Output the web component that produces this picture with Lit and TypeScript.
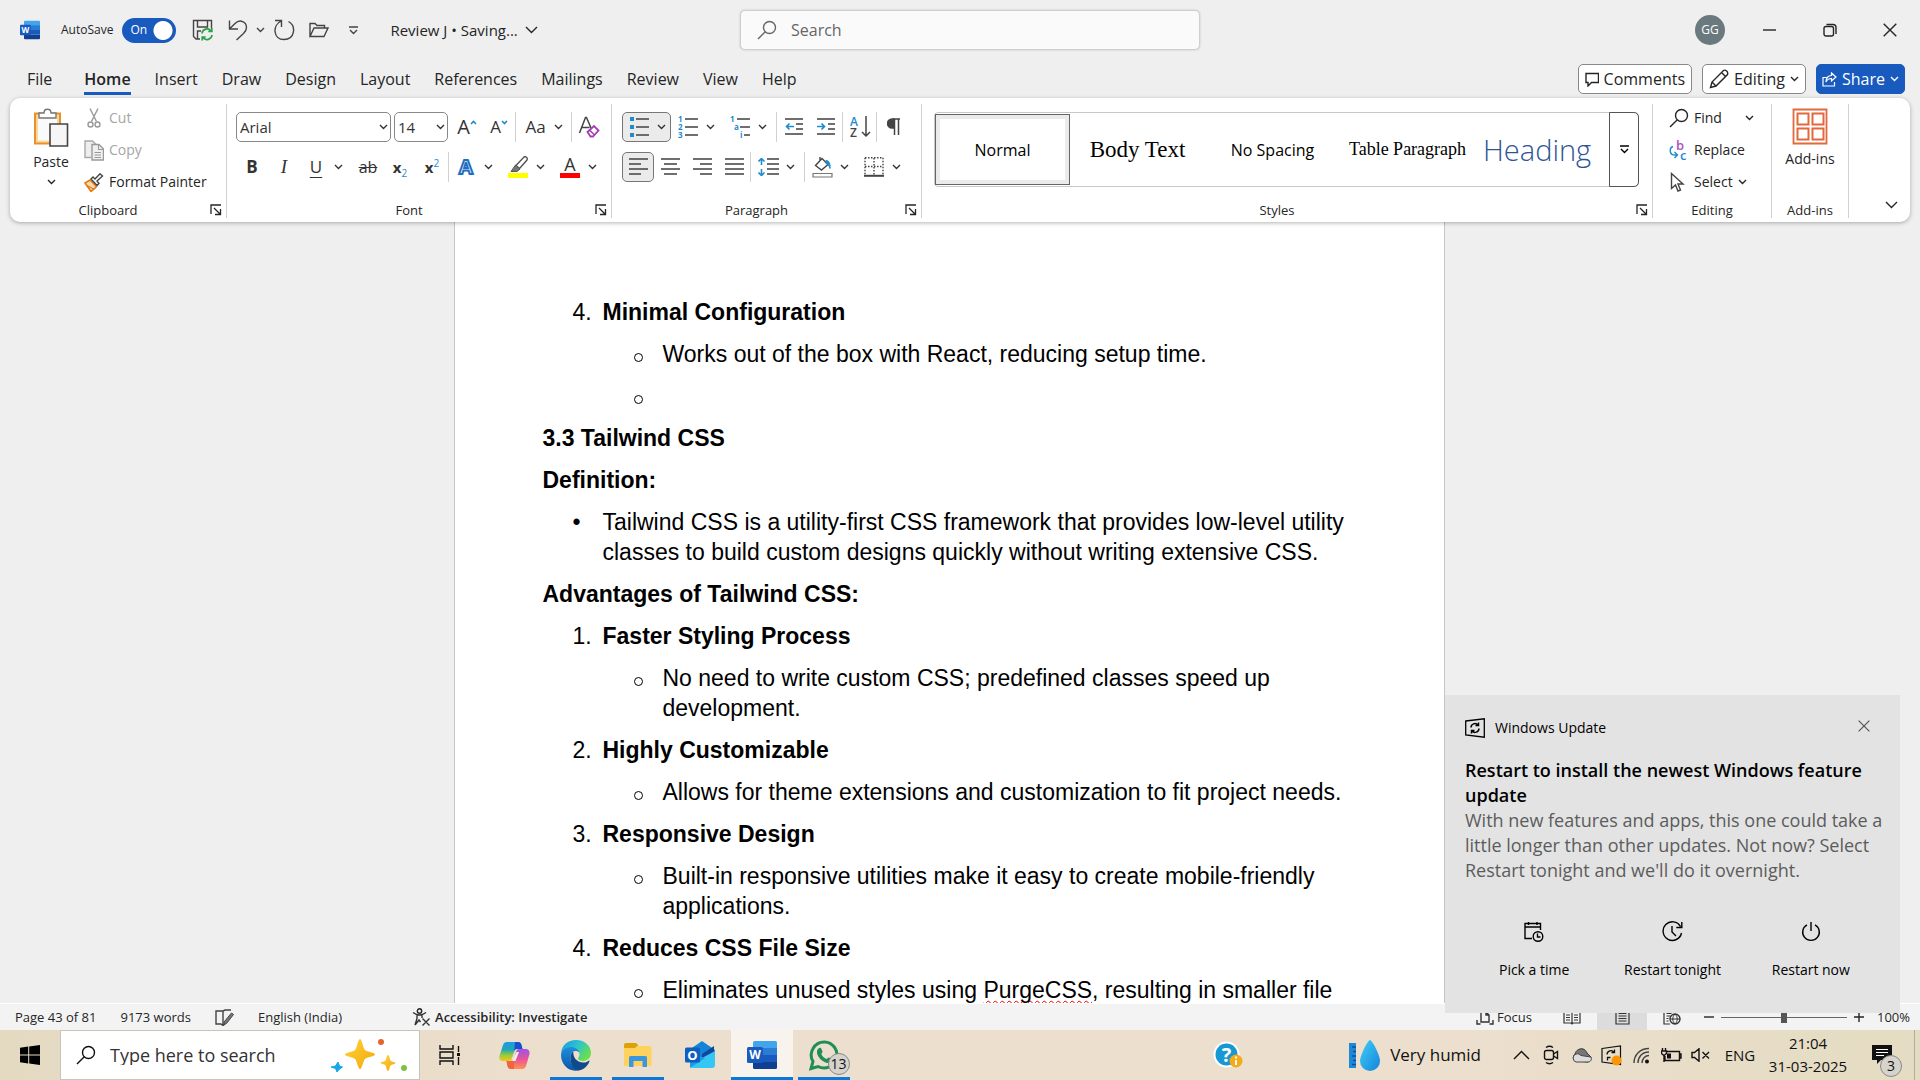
import { LitElement, html, svg, css, nothing, TemplateResult, SVGTemplateResult } from "lit";
import { customElement, state } from "lit/decorators.js";
import { classMap } from "lit/directives/class-map.js";

const icon = (w: number, h: number, body: SVGTemplateResult) => html`<svg
  width=${w}
  height=${h}
  viewBox="0 0 ${w} ${h}"
  fill="none"
  stroke="currentColor"
  stroke-width="1.4"
  aria-hidden="true"
>
  ${body}
</svg>`;

const chevron = () => icon(9, 6, svg`<path d="M1 1l3.5 3.5L8 1"/>`);
const bigChevron = () => icon(13, 8, svg`<path d="M1 1l5.5 5.5L12 1"/>`);
const moreChevron = () => icon(9, 9, svg`<path d="M0 1h9M1 4l3.5 3.5L8 4"/>`);
const launcher = () =>
  icon(12, 12, svg`<path d="M1 10V1h10M4 4l6 6M10.500 5v5.500H5" stroke-width="1.300"/>`);

const wordLogo = (size: number) => html`<svg width=${size} height=${size} viewBox="0 0 30 30" aria-hidden="true">
  <rect x="6" y="1" width="24" height="8" rx="1.500" fill="#41a5ee" />
  <path d="M6 8h24v7H6z" fill="#2b7cd3" />
  <path d="M6 15h24v7H6z" fill="#185abd" />
  <path d="M6 22h24v5.500a1.500 1.500 0 0 1-1.500 1.500h-21A1.500 1.500 0 0 1 6 27.500z" fill="#103f91" />
  <rect x="0" y="7" width="16" height="16" rx="1.500" fill="#185abd" />
  <text x="8" y="19" text-anchor="middle" font-size="12" font-weight="700" fill="#fff" font-family="Open Sans, sans-serif">W</text>
</svg>`;

const lines = (rows: number[][]) =>
  svg`${rows.map(([x1, x2, y]) => svg`<path d="M${x1} ${y}H${x2}" stroke="#555" stroke-width="1.700"/>`)}`;

const blue = "#1e8bcd";

const I = {
  save: () =>
    icon(
      22,
      22,
      svg`<path d="M8 20H4L1.500 17.500V1.500h18V9M5.500 1.500V8h10V1.500M5.500 20v-8H9" stroke="#444"/>
      <path d="M10 14.500a5 5 0 0 1 9-2.500M19.800 9v3.500h-3.500M20 16a5 5 0 0 1-9 2.500M10.200 21.500V18h3.500" stroke="#2ba147" stroke-width="1.700"/>`,
    ),
  undo: () => icon(20, 22, svg`<path d="M1.500 1.500v8.500h8.500M1.500 10L7 4.500C12-.5 18.500 3 18.500 8.500c0 3-1 4-3 6L8.500 21"/>`),
  redo: () => icon(22, 22, svg`<path d="M2 1.500h6.500V8M8.500 1.800C-1 6 0 20.500 11 20.500c11 0 12.500-13.500 4.500-18"/>`),
  folder: () => icon(20, 16, svg`<path d="M1 14.500V1.500h5l2 2h7.500V6M1 14.500L5 6h14l-4 8.500H1z"/>`),
  search: () => icon(20, 20, svg`<circle cx="12.500" cy="7.500" r="6"/><path d="M8.300 11.800L1 19"/>`),
  min: () => icon(14, 14, svg`<path d="M0 7h13"/>`),
  restore: () => icon(14, 14, svg`<rect x="1" y="3.500" width="9.500" height="9.500" rx="2"/><path d="M3.500 1.500H10A3 3 0 0 1 13 4.500V11"/>`),
  close: () => icon(14, 14, svg`<path d="M.7.7l12.600 12.600M13.300.7L.7 13.300"/>`),
  comment: () => icon(14, 15, svg`<path d="M1 1.500h12.500v9H6.500L3 14v-3.500H1z"/>`),
  pencil: () => icon(20, 20, svg`<path d="M1.500 18.500L3 13 14.500 1.500c2-1.200 5 1.500 4 4L7 17zM12.500 3.500l4 4M3 13l4 4"/>`),
  share: () => icon(15, 15, svg`<path d="M4.500 5.500H1v8.500h11.500V10M9.500 1l4.500 4-4.500 4V6.500C6.500 6.500 5 7.500 4 10c0-4 2-6.500 5.500-6.500z" stroke-width="1.200"/>`),
  paste: () =>
    icon(
      36,
      40,
      svg`<path d="M2 5.500h25v30H2z" fill="#f9d79a" stroke="#e8912d" stroke-width="2"/>
      <path d="M5 8.500h19v24H5z" fill="#fafafa" stroke="none"/>
      <path d="M6 10V5h5c0-5 7-5 7 0h5v5z" fill="#fff" stroke="#777"/>
      <path d="M17 16h17.500v22H17z" fill="#f6f6f6" stroke="#444" stroke-width="1.600"/>`,
    ),
  cut: () =>
    icon(20, 20, svg`<path d="M6 .5l6.500 13M14 .5l-6.500 13" stroke="#999"/><circle cx="6.500" cy="16.500" r="2.500" stroke="#999"/><circle cx="13.500" cy="16.500" r="2.500" stroke="#999"/>`),
  copy: () =>
    icon(
      20,
      21,
      svg`<path d="M7 17.500H1V1h7.500L12 4.500" stroke="#a8a8a8" fill="#eee"/><path d="M8 4.500h7l4.500 4.500v11H8z" fill="#f0f0f0" stroke="#999"/>
      <path d="M14.500 4.500V9.500h5M10.500 12.500h6.500M10.500 15h6.500M10.500 17.500h6.500" stroke="#999" stroke-width="1.100"/>`,
    ),
  painter: () =>
    icon(
      20,
      19,
      svg`<path d="M1 10l5-3 6.500 6.500c-1.500 2-3.500 3.500-5.500 5z" fill="#fbd9a8" stroke="#e07b1c" stroke-width="1.600"/><path d="M3 12.500l6.500 3.500" stroke="#e07b1c"/>
      <path d="M7 6l6 6.500 2-2-2-2.500 5.500-5L16 .8 11 6 9 4z" fill="#fff" stroke="#444"/>`,
    ),
  clear: () =>
    icon(
      22,
      22,
      svg`<path d="M1.500 17L7.500 1.500h1L13 12M4 11.500h7.500" stroke="#444" stroke-width="1.500"/>
      <path d="M9.500 16l6.500-6 4.500 4.500-5.500 6h-2.500z" fill="#fff" stroke="#a33fb0" stroke-width="1.800"/><path d="M11.500 14l4.500 4.500" stroke="#a33fb0" stroke-width="1.600"/>`,
    ),
  pen: () =>
    icon(
      20,
      22,
      svg`<path d="M8 9.500l8-8.500c2-1 4 1 3 3l-7.500 8.500z" fill="#fff" stroke="#555"/><path d="M7.500 9l4.500 4-3 2.500H3z" fill="#777" stroke="#555" stroke-width="1"/><path d="M0 17h20v5H0z" fill="#ffff00" stroke="none"/>`,
    ),
  bullets: () => icon(20, 20, svg`<path d="M1 0h4v4H1zM1 8h4v4H1zM1 16h4v4H1z" fill=${blue} stroke="none"/>${lines([[7, 20, 2], [7, 20, 10], [7, 20, 18]])}`),
  numbers: () =>
    icon(
      20,
      22,
      svg`<g fill=${blue} stroke="none" font-size="8" font-weight="700" font-family="Open Sans, sans-serif"><text x="0" y="6">1</text><text x="0" y="14">2</text><text x="0" y="22">3</text></g>${lines([[7, 20, 3], [7, 20, 11], [7, 20, 19]])}`,
    ),
  multi: () =>
    icon(
      20,
      22,
      svg`<g fill=${blue} stroke="none" font-size="8" font-weight="700" font-family="Open Sans, sans-serif"><text x="0" y="6">1</text><text x="4" y="14">a</text><text x="10" y="22">i</text></g>${lines([[7, 20, 3], [10, 20, 11], [14, 20, 19]])}`,
    ),
  outdent: () => icon(19, 18, svg`${lines([[0, 18, 1], [11, 18, 6], [11, 18, 11], [0, 18, 16]])}<path d="M9 8.500H1.500M4.500 5.500l-3 3 3 3" stroke=${blue} stroke-width="1.600"/>`),
  indent: () => icon(19, 18, svg`${lines([[0, 18, 1], [11, 18, 6], [11, 18, 11], [0, 18, 16]])}<path d="M0 8.500h7.500M4.500 5.500l3 3-3 3" stroke=${blue} stroke-width="1.600"/>`),
  sort: () =>
    icon(
      21,
      22,
      svg`<g stroke="none" font-size="12" font-weight="600" font-family="Open Sans, sans-serif"><text x="0" y="10" fill=${blue}>A</text><text x="0" y="21" fill="#444">Z</text></g><path d="M16 0v20M12 16l4 4 4-4" stroke="#444" stroke-width="1.500"/>`,
    ),
  pilcrow: () => icon(14, 18, svg`<path d="M13 1H6M7.500 1v16M11.500 1v16" stroke="#444" stroke-width="1.500"/><path d="M7 1H5a4.500 4.500 0 0 0 0 9h2z" fill="#444" stroke="#444"/>`),
  left: () => icon(19, 18, lines([[0, 19, 1], [0, 12, 6], [0, 19, 11], [0, 12, 16]])),
  center: () => icon(19, 18, lines([[0, 19, 1], [3, 16, 6], [0, 19, 11], [3, 16, 16]])),
  right: () => icon(19, 18, lines([[0, 19, 1], [7, 19, 6], [0, 19, 11], [7, 19, 16]])),
  justify: () => icon(19, 18, lines([[0, 19, 1], [0, 19, 6], [0, 19, 11], [0, 19, 16]])),
  spacing: () => icon(21, 18, svg`${lines([[9, 21, 1], [9, 21, 6], [9, 21, 11], [9, 21, 16]])}<path d="M3.500 0v7M.5 3.500l3-3 3 3M3.500 18v-7M.5 14.500l3 3 3-3" stroke=${blue} stroke-width="1.600"/>`),
  shading: () =>
    icon(
      21,
      22,
      svg`<path d="M3.500 9.500L10 2.500l6 6-6.500 5.500zM8 1v4" stroke="#444"/><path d="M14 4.500c3 0 4.500 3 4 8-1-3-2-4-4-5z" fill=${blue} stroke=${blue} stroke-width="1"/><path d="M1 17.500h19v3.500H1z" fill="#fff" stroke="#777" stroke-width="1.200"/>`,
    ),
  borders: () => icon(20, 20, svg`<path d="M1 .8h18M1 .8V18M19 .8V18M10 1v17M1 9.500h18" stroke="#444" stroke-dasharray="1.500 1.500"/><path d="M0 18.800h20" stroke="#444" stroke-width="2"/>`),
  replace: () =>
    icon(
      20,
      22,
      svg`<g stroke="none" font-size="13" font-weight="600" font-family="Open Sans, sans-serif"><text x="7" y="11" fill="#b04fc0">b</text><text x="11" y="21" fill=${blue}>c</text></g><path d="M4 7.500C0 9 0 16 6 16h2M5.500 13l3 3-3 3" stroke=${blue}/>`,
    ),
  select: () => icon(20, 20, svg`<path d="M2.500 1.500v15l4-3.500 2.500 6 2.500-1-2.500-6h5z" stroke="#444"/>`),
  addins: () =>
    icon(
      36,
      37,
      svg`<g stroke="#e0693e" stroke-width="2"><path d="M1.500 1.500h33v34h-33z" stroke-width="1.800"/><path d="M5.500 5.500h11v11h-11zM20.500 5.500h11v11h-11zM5.500 20.500h11v11h-11zM20.500 20.500h11v11h-11z"/></g>`,
    ),
  proof: () => icon(19, 17, svg`<path d="M8 2H1v13h5l2 1.500V2l2-1h6M8 16.500L10 15" stroke="#444"/><path d="M9 13l7.500-9 2 1.500-7 9-2.500 1z" fill="#777" stroke="#444" stroke-width="1"/>`),
  access: () =>
    icon(19, 18, svg`<circle cx="7.500" cy="3" r="2.200"/><path d="M1 4.500c4 3 9 3 13 0M5 6.500v4L3 17M10 6.500V10M3 17l4-5 1.500 2M10.500 10.500l7 7M17.500 10.500l-7 7" stroke="#333"/>`),
  focus: () => icon(18, 16, svg`<path d="M1 11v4h3.500M17 11v4h-3.500M5 3h5l3 3v7H5zM10 3v3h3" stroke="#333"/>`),
  read: () => icon(18, 15, svg`<path d="M1 2h7l1 1 1-1h7v11h-7l-1 1-1-1H1zM9 3v11M3 5h4M3 7.500h4M3 10h4M11 5h4M11 7.500h4M11 10h4" stroke="#333" stroke-width="1.200"/>`),
  print: () => icon(15, 16, svg`<path d="M1 1h13v14H1zM3.500 4.500h8M3.500 7h8M3.500 9.500h8M3.500 12h8" stroke="#333" stroke-width="1.200"/>`),
  web: () => icon(18, 16, svg`<path d="M7 15H1V1h12v3M3.500 4.500h5M3.500 7h4M3.500 9.500h2M3.500 12h2" stroke="#333" stroke-width="1.200"/><circle cx="12" cy="10" r="5" stroke="#333"/><path d="M7 10h10M12 5c-3 3-3 7 0 10M12 5c3 3 3 7 0 10" stroke="#333" stroke-width="1"/>`),
  update: () =>
    icon(
      20,
      20,
      svg`<path d="M.7 3L19.300.8v18.400L.7 17z" stroke-width="1.300"/><path d="M6 9.500a4 4 0 0 1 7-2.500M13.500 4.500V7.500h-3M14 10.500a4 4 0 0 1-7 2.500M6.500 15.500v-3h3" stroke-width="1.500"/>`,
    ),
  calendar: () => icon(20, 20, svg`<path d="M8 16.500H1v-15h15.500V8M1 5h15.500M4.500 0v3M13 0v3"/><circle cx="14" cy="14.500" r="4.800"/><path d="M13.500 11.500v3.500h3"/>`),
  tonight: () => icon(21, 21, svg`<path d="M18.500 5.500A9.300 9.300 0 1 0 19.500 12M19.800 1v5.500h-5.500M10 5v6l4 4"/>`),
  power: () => icon(20, 20, svg`<path d="M6 2.800a8.300 8.300 0 1 0 8 0M10 0v9"/>`),
  windows: () => html`<svg width="20" height="20" viewBox="0 0 20 20" aria-hidden="true"><path d="M0 2.700L8.200 1.500V9.600H0zM9.200 1.400L20 0v9.600H9.200zM0 10.500h8.200v8L0 17.300zM9.200 10.500H20V20L9.200 18.600z" /></svg>`,
  sparkle: () => html`<svg width="76" height="34" viewBox="0 0 76 34" aria-hidden="true">
    <defs><linearGradient id="gold" x1="0" y1="0" x2="1" y2="1"><stop offset="0" stop-color="#ffd43a" /><stop offset="1" stop-color="#f3a70c" /></linearGradient></defs>
    <path d="M29 1c2 0 3 9 5 11s10 2.500 10 4.500-8 2.500-10 4.500-3 10-5 10-3-8-5-10-10-2.500-10-4.500 8-2.500 10-4.500 3-11 5-11z" fill="url(#gold)" />
    <path d="M57 17c1.500 0 1.500 4 2.500 5.500s5 1.500 5 2.500-4 1.500-5 2.500-1 5.500-2.500 5.500-1.500-4-2.500-5.500-5-1.500-5-2.500 4-1.500 5-2.500 1-5.500 2.500-5.500z" fill="url(#gold)" />
    <path d="M7 24l1.500 4 3 1-3.500 2.500L6 34l-1.500-3.500L0 29l4.500-1z" fill="#16a7e8" stroke="#16a7e8" stroke-width="1" stroke-linejoin="round" />
    <circle cx="50" cy="4" r="3" fill="#e8622c" /><circle cx="73" cy="30" r="3" fill="#7dc242" />
  </svg>`,
  taskview: () => icon(22, 20, svg`<path d="M1 0v4h13V0M1 20v-4h13v4M1 7h13v6H1zM19.500 1v6M19.500 12v8" stroke="#111"/><path d="M18 8h3v3h-3z" fill="#111" stroke="none"/>`),
  copilot: () => html`<svg width="31" height="29" viewBox="0 0 31 29" aria-hidden="true">
    <defs>
      <linearGradient id="cpA" x1="0" y1="0" x2="0" y2="1"><stop offset="0" stop-color="#1a9be8" /><stop offset=".4" stop-color="#22a7b8" /><stop offset=".7" stop-color="#9ccb3b" /><stop offset="1" stop-color="#f5c518" /></linearGradient>
      <linearGradient id="cpB" x1="0" y1="0" x2="0" y2="1"><stop offset="0" stop-color="#9a55e8" /><stop offset=".5" stop-color="#e8539b" /><stop offset="1" stop-color="#ff9150" /></linearGradient>
    </defs>
    <path d="M8 1h11c2 0 3 1 3.500 3l1 4h-5c-2 0-3 1-3.500 3l-2 6c-.5 2-1.500 3-3.500 3H4c-3 0-4-2-3.500-5L4 4c.7-2 2-3 4-3z" fill="url(#cpA)" />
    <path d="M16 1h3c2 0 3 1 3.500 3l1 4h-5c-2 0-3 .5-3.500 3z" fill="#1b4fc9" />
    <path d="M23 28H12c-2 0-3-1-3.500-3l-1-5h4c2 0 3-1 3.500-3l2-6c.5-2 1.500-3 3.500-3h6c3 0 4.500 2 4 5l-3.500 12c-.7 2-2 3-4 3z" fill="url(#cpB)" />
    <path d="M15 28h-3c-2 0-3-1-3.500-3l-1-5h4c2 0 3-1 3.500-3z" fill="#f0653d" />
    <path d="M17.500 11h2.500l-3.500 9H13z" fill="#f7ede4" />
  </svg>`,
  edge: () => html`<svg width="32" height="32" viewBox="0 0 32 32" aria-hidden="true">
    <defs>
      <linearGradient id="edA" x1="0" y1="0" x2="1" y2=".6"><stop offset="0" stop-color="#1a93e0" /><stop offset=".5" stop-color="#2bc3d2" /><stop offset="1" stop-color="#6be04a" /></linearGradient>
      <linearGradient id="edB" x1="0" y1="0" x2="0" y2="1"><stop offset="0" stop-color="#1b8fdd" /><stop offset="1" stop-color="#0e54a8" /></linearGradient>
    </defs>
    <path d="M1 14C2 6 8 1 16 1c9 0 15 6 15 13 0 5-4 8-8 8-3 0-5-1-5-2.500 0-1 1.500-1.500 1.500-4.500 0-4-4-6-8-6-5 0-9 2-10.500 5z" fill="url(#edA)" />
    <path d="M1 16c0-5 5-8 10-8 4 0 8 2.500 8.500 6-1-1.500-2.500-2-4-2-4 0-6 4-5 9 1 6 5 9 9 10-10 3-18.500-5-18.500-15z" fill="url(#edB)" />
    <path d="M10.300 18c0-2 1-4.500 3-5.500-.5 5 3 11 10 11 2.500 0 4.500-1 5.500-1.800.7-.4 1 .3.500 1C27 28 23 31 18 31.500c-4-.5-7.700-6-7.700-13.500z" fill="#114a8b" />
  </svg>`,
  explorer: () => html`<svg width="28" height="24" viewBox="0 0 28 24" aria-hidden="true">
    <path d="M0 2a2 2 0 0 1 2-2h10l2 2v3H0z" fill="#e0a106" /><path d="M13 3h13a1.500 1.500 0 0 1 1.500 1.500V23H0V5h11z" fill="#ffd25e" />
    <path d="M5 24V14.500A1.500 1.500 0 0 1 6.500 13h15a1.500 1.500 0 0 1 1.500 1.500V24h-4.500v-6h-9v6z" fill="#3b97dd" />
  </svg>`,
  outlook: () => html`<svg width="30" height="28" viewBox="0 0 30 28" aria-hidden="true">
    <path d="M4 9L17 0l13 9v6L17 22 4 18z" fill="#1384d8" /><path d="M17 13l12-8v9L17 21z" fill="#12469c" />
    <path d="M5 20l12-3 13-7v14a3 3 0 0 1-3 3H8a3 3 0 0 1-3-3z" fill="#36c6f4" /><path d="M5 27l15-10-10-3-5 3z" fill="#1a9be4" />
    <rect x="0" y="6.500" width="15" height="15" rx="1.500" fill="#0f5fc0" />
    <text x="7.500" y="18.500" text-anchor="middle" font-size="13" font-weight="700" fill="#fff" font-family="Open Sans, sans-serif">O</text>
  </svg>`,
  whatsapp: () => html`<svg width="31" height="31" viewBox="0 0 31 31" aria-hidden="true">
    <path d="M15.500 2a13 13 0 1 1-6.500 24.500L2 28.500l2-7A13 13 0 0 1 15.500 2z" fill="none" stroke="#1f8f55" stroke-width="3" />
    <path d="M9.500 8.500c1-1.200 2.500-.8 3 .5l1 2.500c.3 1-1.500 2-1 3 1 2 3 3.500 5 4.500 1 0 1.500-2 2.500-1.500l3 1.500c.6 1.500-1 4-4 4-5 0-12-7-11-12 .2-1 .8-2 1.500-2.500z" fill="#1f8f55" />
  </svg>`,
  help: () => html`<svg width="30" height="28" viewBox="0 0 30 28" aria-hidden="true">
    <circle cx="13.500" cy="13.500" r="13" fill="#fff" /><circle cx="13.500" cy="13.500" r="11" fill="#1598d4" />
    <text x="13.500" y="20.500" text-anchor="middle" font-size="20" font-weight="700" fill="#fff" font-family="Open Sans, sans-serif">?</text>
    <circle cx="23" cy="20" r="6.500" fill="#f5ab18" /><path d="M23 19v5M23 15.500v2" stroke="#fff" stroke-width="2" />
  </svg>`,
  humid: () => html`<svg width="31" height="32" viewBox="0 0 31 32" aria-hidden="true">
    <defs><linearGradient id="drop" x1="0" y1="0" x2="1" y2="1"><stop offset="0" stop-color="#40d0f5" /><stop offset="1" stop-color="#1583dc" /></linearGradient></defs>
    <path d="M0 4h7v25H0z" fill="#1e88d8" /><path d="M3 8h4M4 12.500h3M3 17h4M4 21.500h3M3 25.500h4" stroke="#0d4f96" stroke-width="1.500" />
    <path d="M21 1c2 0 10 15 10 21a9.800 9.800 0 0 1-20 0C11 16 19 1 21 1z" fill="url(#drop)" />
  </svg>`,
  up: () => icon(17, 10, svg`<path d="M1 9l7.500-7.500L16 9"/>`),
  camera: () => icon(16, 20, svg`<rect x="1.500" y="5.500" width="9" height="9" rx="2"/><path d="M10.500 9l4-2.500v7l-4-2.500M3 2.500c2-1.500 5-1.500 7 0M3 17.500c2 1.500 5 1.500 7 0"/>`),
  cloud: () => html`<svg width="21" height="15" viewBox="0 0 21 15" aria-hidden="true">
    <path d="M5 13A4 4 0 0 1 4 6c1-4 5-6 8-5 2 .5 3 2 4 4l4 4-3 5z" fill="#777" stroke="#333" stroke-width="1" /><path d="M5 14a4.200 4.200 0 0 1 0-8c2-.5 3 0 5 1.500L20 9c1 2 0 5-3 5z" fill="#dcdcdc" stroke="#444" stroke-width="1" />
  </svg>`,
  trayUpdate: () => html`<svg width="21" height="21" viewBox="0 0 21 21" fill="none" stroke="#111" aria-hidden="true">
    <path d="M1 3.500L19.500 1v18.500L1 17z" stroke-width="1.200" /><path d="M6 9.500a4 4 0 0 1 7-2.500M13.500 4.500V7.500h-3M6.500 15.500v-3h3" stroke-width="1.300" /><circle cx="15.500" cy="15.500" r="5" fill="#ff9500" stroke="none" />
  </svg>`,
  wifi: () => icon(17, 17, svg`<path d="M1 16C1 8 7 1.500 16 1.500M5 16c0-6 4-11 11-11M9 16c0-4 3-7.500 7-7.500" stroke="#444"/><circle cx="14" cy="14.500" r="2" fill="#111" stroke="none"/>`),
  battery: () => icon(21, 14, svg`<path d="M6 3.500h12.500v9H4V8M18.500 6H20v4h-1.500M1.500 0v3M4.500 0v3M.5 3h5v2.500L3 7.500.5 5.500zM3 7v7"/><path d="M6 5.500h4v5H6z" fill="#111" stroke="none"/>`),
  mute: () => icon(20, 14, svg`<path d="M1 4.500h2.500L8 .8v12.400L3.500 9.500H1zM11.500 4l6.500 6.500M18 4l-6.500 6.500"/>`),
  note: () => html`<svg width="20" height="20" viewBox="0 0 20 20" aria-hidden="true"><path d="M0 0h20v15H9l-4 4v-4H0z" fill="#111" /><path d="M4 4.500h12M4 7.500h12M4 10.500h8" stroke="#fff" stroke-width="1.200" /></svg>`,
};

type Entry = { kind: "title"; text: string } | { kind: "num"; n: string; text: string } | { kind: "dot"; text: string } | { kind: "sub"; text: string | TemplateResult };

const DOCUMENT: Entry[] = [
  { kind: "num", n: "4.", text: "Minimal Configuration" },
  { kind: "sub", text: "Works out of the box with React, reducing setup time." },
  { kind: "sub", text: "\u00a0" },
  { kind: "title", text: "3.3 Tailwind CSS" },
  { kind: "title", text: "Definition:" },
  { kind: "dot", text: "Tailwind CSS is a utility-first CSS framework that provides low-level utility classes to build custom designs quickly without writing extensive CSS." },
  { kind: "title", text: "Advantages of Tailwind CSS:" },
  { kind: "num", n: "1.", text: "Faster Styling Process" },
  { kind: "sub", text: "No need to write custom CSS; predefined classes speed up development." },
  { kind: "num", n: "2.", text: "Highly Customizable" },
  { kind: "sub", text: "Allows for theme extensions and customization to fit project needs." },
  { kind: "num", n: "3.", text: "Responsive Design" },
  { kind: "sub", text: "Built-in responsive utilities make it easy to create mobile-friendly applications." },
  { kind: "num", n: "4.", text: "Reduces CSS File Size" },
  { kind: "sub", text: html`Eliminates unused styles using <span class="typo">PurgeCSS</span>, resulting in smaller file` },
];

const base = css`
  :host {
    display: block;
    font-family: "Open Sans", "Noto Sans", sans-serif;
    font-size: 15px;
    line-height: 20px;
    color: #252525;
  }
  * {
    box-sizing: border-box;
  }
  svg {
    display: block;
    flex: none;
  }
  button,
  input,
  select {
    font: inherit;
    color: inherit;
    margin: 0;
    padding: 0;
    border: 0;
    background: none;
  }
  button {
    display: flex;
    align-items: center;
    justify-content: center;
    white-space: nowrap;
  }
  a {
    color: inherit;
    text-decoration: none;
  }
`;

@customElement("title-bar")
class TitleBar extends LitElement {
  @state() private autosave = true;

  static styles = [
    base,
    css`
      .bar {
        display: grid;
        grid-template-columns: 1fr minmax(200px, 460px) 1fr;
        align-items: center;
        height: 60px;
        padding-left: 20px;
      }
      .left,
      .right,
      .switch {
        display: flex;
        align-items: center;
      }
      .switch {
        gap: 9px;
        margin-left: 21px;
        font-size: 12px;
      }
      .toggle {
        display: grid;
        align-items: center;
      }
      .toggle > * {
        grid-area: 1 / 1;
      }
      .toggle input {
        appearance: none;
        width: 54px;
        height: 25px;
        border-radius: 13px;
        background: radial-gradient(circle at 41px 50%, #fff 9px, #185abd 10px);
      }
      .toggle span {
        padding-left: 8px;
        color: #fff;
        pointer-events: none;
      }
      .tools {
        display: flex;
        align-items: center;
        margin-left: 16px;
        color: #444;
      }
      .name {
        gap: 7px;
        margin-left: 32px;
        font-size: 15px;
      }
      .gap-s {
        margin-left: 8px;
      }
      .gap-m {
        margin-left: 14px;
      }
      .gap-l {
        margin-left: 20px;
      }
      .search {
        display: flex;
        align-items: center;
        gap: 14px;
        height: 40px;
        padding: 0 16px;
        border: 1px solid #d0d0d0;
        border-radius: 5px;
        background: #fafafa;
        box-shadow: 0 0 2px #bbb;
        color: #666;
      }
      .search input {
        flex: 1;
        min-width: 0;
        font-size: 16px;
      }
      .search input::placeholder {
        color: #666;
        opacity: 1;
      }
      .right {
        justify-content: flex-end;
      }
      .avatar {
        width: 30px;
        height: 30px;
        margin-right: 15px;
        border-radius: 50%;
        background: #69797e;
        color: #fff;
        font-size: 12px;
      }
      .window {
        width: 60px;
        height: 60px;
      }
    `,
  ];

  render() {
    return html`<header class="bar">
      <div class="left">
        ${wordLogo(20)}
        <label class="switch">
          AutoSave
          <span class="toggle">
            <input type="checkbox" .checked=${this.autosave} @change=${() => (this.autosave = !this.autosave)} />
            <span>${this.autosave ? "On" : "Off"}</span>
          </span>
        </label>
        <div class="tools">
          <button aria-label="Save">${I.save()}</button>
          <button class="gap-m" aria-label="Undo">${I.undo()}</button>
          <button class="gap-s" aria-label="Undo options">${chevron()}</button>
          <button class="gap-s" aria-label="Repeat">${I.redo()}</button>
          <button class="gap-m" aria-label="Open">${I.folder()}</button>
          <button class="gap-l" aria-label="Customize toolbar">${moreChevron()}</button>
        </div>
        <button class="name">Review J • Saving... ${bigChevron()}</button>
      </div>
      <label class="search">${I.search()}<input type="search" placeholder="Search" aria-label="Search" /></label>
      <div class="right">
        <button class="avatar" aria-label="Account">GG</button>
        <button class="window" aria-label="Minimize">${I.min()}</button>
        <button class="window" aria-label="Restore">${I.restore()}</button>
        <button class="window" aria-label="Close">${I.close()}</button>
      </div>
    </header>`;
  }
}

@customElement("ribbon-tabs")
class RibbonTabs extends LitElement {
  @state() private active = "Home";

  static styles = [
    base,
    css`
      .row {
        display: flex;
        align-items: center;
        justify-content: space-between;
        height: 38px;
        padding: 0 15px;
      }
      nav,
      .actions {
        display: flex;
      }
      .tab {
        display: flex;
        padding: 0 12px;
        font-size: 16px;
      }
      .tab span {
        height: 32px;
        line-height: 32px;
        border-bottom: 3px solid transparent;
      }
      .tab:first-child {
        margin-right: 8px;
      }
      .on {
        font-weight: 600;
      }
      .on span {
        border-color: #185abd;
      }
      .actions {
        gap: 10px;
        font-size: 16px;
      }
      .actions button {
        gap: 5px;
        height: 30px;
        padding: 0 6px;
        border: 1px solid #888;
        border-radius: 5px;
        background: #fff;
      }
      .actions .share {
        padding: 0 5px;
        border-color: #185abd;
        background: #185abd;
        color: #fff;
      }
    `,
  ];

  render() {
    const tabs = ["File", "Home", "Insert", "Draw", "Design", "Layout", "References", "Mailings", "Review", "View", "Help"];
    return html`<div class="row">
      <nav>
        ${tabs.map((t) => html`<button class=${classMap({ tab: true, on: t === this.active })} @click=${() => (this.active = t)}><span>${t}</span></button>`)}
      </nav>
      <div class="actions">
        <button>${I.comment()}Comments</button>
        <button>${I.pencil()}Editing ${chevron()}</button>
        <button class="share">${I.share()}Share ${chevron()}</button>
      </div>
    </div>`;
  }
}

@customElement("ribbon-panel")
class RibbonPanel extends LitElement {
  static styles = [
    base,
    css`
      .ribbon {
        display: flex;
        margin: 0 10px;
        padding: 6px 0 4px;
        border-radius: 10px;
        background: #fff;
        box-shadow: 0 1px 4px rgba(0, 0, 0, 0.3);
      }
      .group {
        display: flex;
        flex-direction: column;
        justify-content: space-between;
        height: 114px;
        border-right: 1px solid #d0d0d0;
      }
      .foot {
        display: grid;
        grid-template-columns: 1fr 20px;
        justify-items: center;
        align-items: center;
        font-size: 13px;
        line-height: 16px;
        white-space: nowrap;
      }
      .foot.plain {
        grid-template-columns: 1fr;
      }
      .clip {
        width: 217px;
      }
      .font {
        width: 385px;
      }
      .para {
        width: 310px;
      }
      .styles {
        flex: 1;
        min-width: 0;
      }
      .edit {
        width: 119px;
      }
      .add {
        width: 77px;
      }
      .tail {
        align-items: flex-end;
        width: 61px;
        padding: 0 0 9px 24px;
      }
      .two {
        display: flex;
      }
      .stack {
        display: flex;
        flex-direction: column;
        gap: 4px;
        font-size: 14px;
      }
      .stack button {
        justify-content: flex-start;
        gap: 5px;
        height: 28px;
      }
      .paste {
        flex-direction: column;
        justify-content: flex-start;
        gap: 4px;
        width: 74px;
        padding: 4px 0 0 8px;
        font-size: 14px;
      }
      .paste svg:last-child {
        margin-top: 3px;
      }
      .off {
        color: #a6a6a6;
      }
      .rows {
        display: flex;
        flex-direction: column;
        gap: 10px;
        padding: 8px 0 0 9px;
        color: #333;
      }
      .para .rows {
        padding-left: 10px;
      }
      .row {
        display: flex;
        height: 30px;
      }
      .b {
        width: 32px;
      }
      .split {
        justify-content: flex-start;
        width: 52px;
      }
      .split i {
        display: flex;
        justify-content: center;
        width: 32px;
        margin-right: 2px;
        font-style: normal;
      }
      .wide {
        gap: 8px;
        width: 54px;
        font-size: 17px;
      }
      .sep {
        width: 1px;
        margin-right: 1px;
        background: #d0d0d0;
      }
      .on {
        border: 1px solid #777;
        border-radius: 5px;
        background: #ebebeb;
      }
      .split.on {
        width: 49px;
        margin-right: 1px;
      }
      .combo {
        display: grid;
        align-items: center;
        width: 54px;
        margin-right: 3px;
      }
      .combo.face {
        width: 155px;
      }
      .combo > * {
        grid-area: 1 / 1;
      }
      .combo select {
        appearance: none;
        width: 100%;
        height: 30px;
        padding: 0 3px;
        border: 1px solid #888;
        border-radius: 5px;
        background: #fff;
      }
      .combo svg {
        justify-self: end;
        margin-right: 3px;
        pointer-events: none;
      }
      .glyph {
        font-size: 20px;
      }
      .bold {
        font-size: 17px;
        font-weight: 700;
      }
      .italic {
        font: italic 19px "Liberation Serif", serif;
      }
      .under {
        font-size: 17px;
        text-decoration: underline;
        text-underline-offset: 4px;
      }
      .strike {
        font-size: 16px;
        text-decoration: line-through;
      }
      .b sup,
      .b sub {
        font-size: 10px;
        line-height: 10px;
        color: #1e8bcd;
      }
      .small {
        font-size: 17px;
      }
      .effect {
        font-size: 20px;
        font-weight: 700;
        color: #fff;
        -webkit-text-stroke: 2px #1e6fbf;
      }
      .color {
        width: 20px;
        font-size: 18px;
        line-height: 17px;
        text-align: center;
        border-bottom: 5px solid #f00;
      }
      .gallery {
        display: flex;
        height: 75px;
        margin: 8px 13px 0 12px;
        border: 1px solid #c8c8c8;
        border-radius: 4px;
        color: #000;
      }
      .list {
        display: flex;
        flex: 1;
        min-width: 0;
        margin-right: 9px;
        overflow: hidden;
      }
      .style {
        flex: none;
        width: 135px;
        margin: 1px 0;
      }
      .style.picked {
        border: 1px solid #666;
        box-shadow: inset 0 0 0 4px #ebebeb;
      }
      .s-small {
        font-size: 16px;
      }
      .s-body {
        font: 23px "Liberation Serif", serif;
      }
      .s-table {
        font: 18px "Liberation Serif", serif;
      }
      .s-head {
        justify-content: flex-start;
        padding-left: 8px;
        font-size: 29px;
        line-height: 40px;
        font-weight: 300;
        color: #2f5496;
      }
      .more {
        width: 30px;
        margin: -1px;
        border: 1px solid #555;
        border-radius: 0 5px 5px 0;
      }
      .edit .stack {
        padding-left: 16px;
      }
      .push {
        margin-left: 18px;
      }
      .addbtn {
        flex-direction: column;
        gap: 4px;
        padding-top: 4px;
        font-size: 14px;
      }
    `,
  ];

  private split(label: string, content: unknown, on = false) {
    return html`<button class=${classMap({ split: true, on })} aria-label=${label}><i>${content}</i>${chevron()}</button>`;
  }

  private b(label: string, content: unknown, on = false) {
    return html`<button class=${classMap({ b: true, on })} aria-label=${label}>${content}</button>`;
  }

  private foot(label: string, launch = true) {
    return html`<div class=${classMap({ foot: true, plain: !launch })}>
      <span>${label}</span>${launch ? html`<button aria-label="${label} settings">${launcher()}</button>` : nothing}
    </div>`;
  }

  render() {
    const sep = html`<span class="sep"></span>`;
    const tip = (d: string) => icon(7, 16, svg`<path d=${d} stroke=${blue} stroke-width="1.600"/>`);
    return html`<section class="ribbon">
      <div class="group clip">
        <div class="two">
          <button class="paste">${I.paste()}<span>Paste</span>${chevron()}</button>
          <div class="stack">
            <button class="off">${I.cut()}Cut</button>
            <button class="off">${I.copy()}Copy</button>
            <button>${I.painter()}Format Painter</button>
          </div>
        </div>
        ${this.foot("Clipboard")}
      </div>
      <div class="group font">
        <div class="rows">
          <div class="row">
            <label class="combo face"><select aria-label="Font"><option>Arial</option></select>${chevron()}</label>
            <label class="combo"><select aria-label="Font size"><option>14</option></select>${chevron()}</label>
            ${this.b("Grow font", html`<span class="glyph">A</span>${tip("M1 5l2.500-2.500L6 5")}`)}
            ${this.b("Shrink font", html`<span class="small">A</span>${tip("M1 2l2.500 2.500L6 2")}`)} ${sep}
            <button class="wide">Aa ${chevron()}</button>
            ${sep} ${this.b("Clear formatting", I.clear())}
          </div>
          <div class="row">
            ${this.b("Bold", html`<span class="bold">B</span>`)} ${this.b("Italic", html`<span class="italic">I</span>`)}
            ${this.split("Underline", html`<span class="under">U</span>`)}
            ${this.b("Strikethrough", html`<span class="strike">ab</span>`)}
            ${this.b("Subscript", html`<span><b>x</b><sub>2</sub></span>`)} ${this.b("Superscript", html`<span><b>x</b><sup>2</sup></span>`)}
            ${sep} ${this.split("Text effects", html`<span class="effect">A</span>`)} ${this.split("Highlight", I.pen())}
            ${this.split("Font color", html`<span class="color">A</span>`)}
          </div>
        </div>
        ${this.foot("Font")}
      </div>
      <div class="group para">
        <div class="rows">
          <div class="row">
            ${this.split("Bullets", I.bullets(), true)} ${this.split("Numbering", I.numbers())} ${this.split("Multilevel list", I.multi())}
            ${sep} ${this.b("Decrease indent", I.outdent())} ${this.b("Increase indent", I.indent())} ${sep} ${this.b("Sort", I.sort())}
            ${sep} ${this.b("Show marks", I.pilcrow())}
          </div>
          <div class="row">
            ${this.b("Align left", I.left(), true)} ${this.b("Center", I.center())} ${this.b("Align right", I.right())}
            ${this.b("Justify", I.justify())} ${sep} ${this.split("Line spacing", I.spacing())} ${sep}
            ${this.split("Shading", I.shading())} ${this.split("Borders", I.borders())}
          </div>
        </div>
        ${this.foot("Paragraph")}
      </div>
      <div class="group styles">
        <div class="gallery">
          <div class="list">
            <button class="style s-small picked">Normal</button>
            <button class="style s-body">Body Text</button>
            <button class="style s-small">No Spacing</button>
            <button class="style s-table">Table Paragraph</button>
            <button class="style s-head">Heading 1</button>
          </div>
          <button class="more" aria-label="More styles">${moreChevron()}</button>
        </div>
        ${this.foot("Styles")}
      </div>
      <div class="group edit">
        <div class="stack">
          <button>${I.search()}Find <span class="push">${chevron()}</span></button>
          <button>${I.replace()}Replace</button>
          <button>${I.select()}Select ${chevron()}</button>
        </div>
        ${this.foot("Editing", false)}
      </div>
      <div class="group add">
        <button class="addbtn">${I.addins()}Add-ins</button>
        ${this.foot("Add-ins", false)}
      </div>
      <button class="tail" aria-label="Collapse ribbon">${bigChevron()}</button>
    </section>`;
  }
}

@customElement("document-view")
class DocumentView extends LitElement {
  static styles = [
    base,
    css`
      :host {
        flex: 1;
        min-height: 0;
        overflow: hidden;
      }
      .canvas {
        display: flex;
        justify-content: center;
        height: 100%;
        padding-right: 22px;
        overflow: hidden;
      }
      .page {
        flex: 0 1 991px;
        min-height: max-content;
        padding: 75px 80px 0 88px;
        border: 1px solid #c6c6c6;
        border-width: 0 1px;
        background: #fff;
        color: #000;
        font: 23px/30px "Liberation Sans", Arial, sans-serif;
      }
      .p {
        margin: 0 0 12px;
        min-height: 30px;
        font-size: 23px;
      }
      .item {
        display: grid;
        grid-template-columns: 30px 1fr;
        align-items: baseline;
        padding-left: 30px;
      }
      .sub {
        padding-left: 90px;
      }
      .strong {
        font-weight: 700;
      }
      .ring {
        width: 9px;
        height: 9px;
        margin-left: 1px;
        border: 1px solid #000;
        border-radius: 50%;
      }
      .typo {
        text-decoration: underline wavy #e00 1px;
        text-underline-offset: 2px;
        text-decoration-skip-ink: none;
      }
    `,
  ];

  private entry(e: Entry) {
    switch (e.kind) {
      case "title":
        return html`<h2 class="p strong">${e.text}</h2>`;
      case "num":
        return html`<div class="p item"><span>${e.n}</span><span class="strong">${e.text}</span></div>`;
      case "dot":
        return html`<div class="p item"><span>•</span><span>${e.text}</span></div>`;
      case "sub":
        return html`<div class="p item sub"><span class="ring"></span><span>${e.text}</span></div>`;
    }
  }

  render() {
    return html`<main class="canvas"><article class="page">${DOCUMENT.map((e) => this.entry(e))}</article></main>`;
  }
}

@customElement("status-bar")
class StatusBar extends LitElement {
  static styles = [
    base,
    css`
      .bar {
        display: flex;
        align-items: center;
        justify-content: space-between;
        height: 27px;
        padding: 0 10px 0 15px;
        border-top: 1px solid #fff;
        background: #f3f3f3;
        font-size: 13px;
      }
      .side {
        display: flex;
        align-items: center;
        height: 100%;
      }
      .left {
        gap: 24px;
      }
      .a11y {
        gap: 4px;
        margin-left: 46px;
        font-weight: 600;
      }
      .focus {
        gap: 3px;
        margin-right: 15px;
      }
      .mode {
        width: 50px;
        height: 100%;
      }
      .here {
        background: #dcdcdc;
      }
      .zoom {
        appearance: none;
        width: 126px;
        height: 12px;
        margin: 0 5px;
        background: linear-gradient(#666, #666) center / 100% 1px no-repeat;
      }
      .zoom::-webkit-slider-thumb {
        appearance: none;
        width: 6px;
        height: 12px;
        background: #555;
      }
      .step {
        width: 14px;
      }
      .side .first {
        margin-left: 5px;
      }
      .pct {
        width: 44px;
        justify-content: flex-end;
      }
    `,
  ];

  render() {
    return html`<footer class="bar">
      <div class="side left">
        <button>Page 43 of 81</button>
        <button>9173 words</button>
        <button aria-label="Proofing">${I.proof()}</button>
        <button>English (India)</button>
        <button class="a11y">${I.access()}Accessibility: Investigate</button>
      </div>
      <div class="side">
        <button class="focus">${I.focus()}Focus</button>
        <button class="mode" aria-label="Read mode">${I.read()}</button>
        <button class="mode here" aria-label="Print layout">${I.print()}</button>
        <button class="mode" aria-label="Web layout">${I.web()}</button>
        <button class="step first" aria-label="Zoom out">${icon(10, 10, svg`<path d="M0 5h10"/>`)}</button>
        <input class="zoom" type="range" min="0" max="200" value="100" aria-label="Zoom" />
        <button class="step" aria-label="Zoom in">${icon(10, 10, svg`<path d="M0 5h10M5 0v10"/>`)}</button>
        <button class="pct">100%</button>
      </div>
    </footer>`;
  }
}

@customElement("task-bar")
class TaskBar extends LitElement {
  static styles = [
    base,
    css`
      .bar {
        display: flex;
        height: 50px;
        background: linear-gradient(90deg, #e4dac2, #ecdfce 30%, #ecdfce 75%, #e4dcc2);
        color: #111;
        font-size: 17px;
      }
      .start,
      .view {
        width: 60px;
      }
      .find {
        display: flex;
        flex: 0 1 360px;
        min-width: 0;
        align-items: center;
        gap: 14px;
        padding: 0 12px 0 15px;
        border: 1px solid #c9c4ba;
        background: #fff;
      }
      .find input {
        flex: 1;
        min-width: 0;
        font-size: 18px;
      }
      .find input::placeholder {
        color: #333;
        opacity: 1;
      }
      .apps {
        display: flex;
        padding-left: 3px;
      }
      .app {
        width: 62px;
        padding: 0 5px;
      }
      .app > span {
        display: grid;
        place-items: center;
        width: 52px;
        height: 50px;
        padding-top: 3px;
        border-bottom: 3px solid transparent;
      }
      .run > span {
        border-color: #0a78d6;
      }
      .current {
        padding: 0;
        background: #f8f3ec;
      }
      .current > span {
        width: 62px;
      }
      .badge {
        position: absolute;
        top: 13px;
        left: 19px;
        display: grid;
        place-items: center;
        width: 22px;
        height: 22px;
        border: 1px solid #888;
        border-radius: 50%;
        background: #d6d3cc;
        font-size: 14px;
        font-style: normal;
      }
      .note .badge {
        top: 10px;
        left: 8px;
      }
      .holder {
        position: relative;
      }
      .tray {
        display: flex;
        align-items: center;
        margin-left: auto;
      }
      .weather {
        gap: 10px;
        margin: 0 25px 0 106px;
      }
      .t {
        width: 30px;
        height: 50px;
      }
      .lang {
        width: 48px;
        font-size: 15px;
      }
      .clock {
        flex-direction: column;
        width: 88px;
        font-size: 15px;
        line-height: 23px;
      }
      .note {
        width: 60px;
        margin-right: 2px;
      }
      .desk {
        width: 6px;
        height: 50px;
        border-left: 1px solid #b3aa98;
      }
    `,
  ];

  render() {
    const app = (label: string, pic: unknown, cls = "") => html`<button class="app ${cls}" aria-label=${label}><span>${pic}</span></button>`;
    return html`<footer class="bar">
      <button class="start" aria-label="Start">${I.windows()}</button>
      <label class="find">${I.search()}<input type="text" placeholder="Type here to search" aria-label="Type here to search" />${I.sparkle()}</label>
      <button class="view" aria-label="Task view">${I.taskview()}</button>
      <div class="apps">
        ${app("Copilot", I.copilot())} ${app("Edge", I.edge(), "run")} ${app("File Explorer", I.explorer(), "run")}
        ${app("Outlook", I.outlook())} ${app("Word", wordLogo(30), "run current")}
        ${app("WhatsApp", html`<div class="holder">${I.whatsapp()}<i class="badge">13</i></div>`, "run")}
      </div>
      <div class="tray">
        <button aria-label="Help">${I.help()}</button>
        <button class="weather">${I.humid()}Very humid</button>
        <button class="t" aria-label="Hidden icons">${I.up()}</button>
        <button class="t" aria-label="Camera">${I.camera()}</button>
        <button class="t" aria-label="OneDrive">${I.cloud()}</button>
        <button class="t" aria-label="Update">${I.trayUpdate()}</button>
        <button class="t" aria-label="Network">${I.wifi()}</button>
        <button class="t" aria-label="Battery">${I.battery()}</button>
        <button class="t" aria-label="Volume">${I.mute()}</button>
        <button class="lang">ENG</button>
        <button class="clock"><span>21:04</span><span>31-03-2025</span></button>
        <button class="note" aria-label="Notifications"><div class="holder">${I.note()}<i class="badge">3</i></div></button>
        <button class="desk" aria-label="Show desktop"></button>
      </div>
    </footer>`;
  }
}

@customElement("update-toast")
class UpdateToast extends LitElement {
  static styles = [
    base,
    css`
      .toast {
        width: 455px;
        padding: 23px 16px 33px 20px;
        background: #e3e3e3;
        color: #000;
        font-size: 14px;
      }
      .head {
        display: flex;
        align-items: center;
        gap: 10px;
        height: 20px;
        margin-bottom: 20px;
      }
      .x {
        margin-left: auto;
        padding: 0 14px 4px 0;
        color: #555;
      }
      .x svg {
        width: 12px;
        height: 12px;
      }
      h1,
      p {
        margin: 0;
        font-size: 18px;
        line-height: 25px;
        font-weight: 600;
      }
      p {
        font-weight: 400;
        color: #5c5c5c;
      }
      .choices {
        display: grid;
        grid-template-columns: repeat(3, 1fr);
        margin: 38px 4px 0 0;
      }
      .choices button {
        flex-direction: column;
        gap: 18px;
      }
    `,
  ];

  render() {
    return html`<aside class="toast" role="alert">
      <div class="head">${I.update()}<span>Windows Update</span><button class="x" aria-label="Dismiss">${I.close()}</button></div>
      <h1>Restart to install the newest Windows feature update</h1>
      <p>With new features and apps, this one could take a little longer than other updates. Not now? Select Restart tonight and we'll do it overnight.</p>
      <div class="choices">
        <button>${I.calendar()}Pick a time</button>
        <button>${I.tonight()}Restart tonight</button>
        <button>${I.power()}Restart now</button>
      </div>
    </aside>`;
  }
}

@customElement("app-root")
class AppRoot extends LitElement {
  static styles = css`
    :host {
      position: relative;
      display: flex;
      flex-direction: column;
      height: 100vh;
      overflow: hidden;
      background: #efefef;
    }
    ribbon-panel {
      position: relative;
      z-index: 1;
    }
    update-toast {
      position: absolute;
      right: 20px;
      bottom: 67px;
      z-index: 2;
    }
  `;

  render() {
    return html`<title-bar></title-bar><ribbon-tabs></ribbon-tabs><ribbon-panel></ribbon-panel><document-view></document-view><status-bar></status-bar><task-bar></task-bar><update-toast></update-toast>`;
  }
}
